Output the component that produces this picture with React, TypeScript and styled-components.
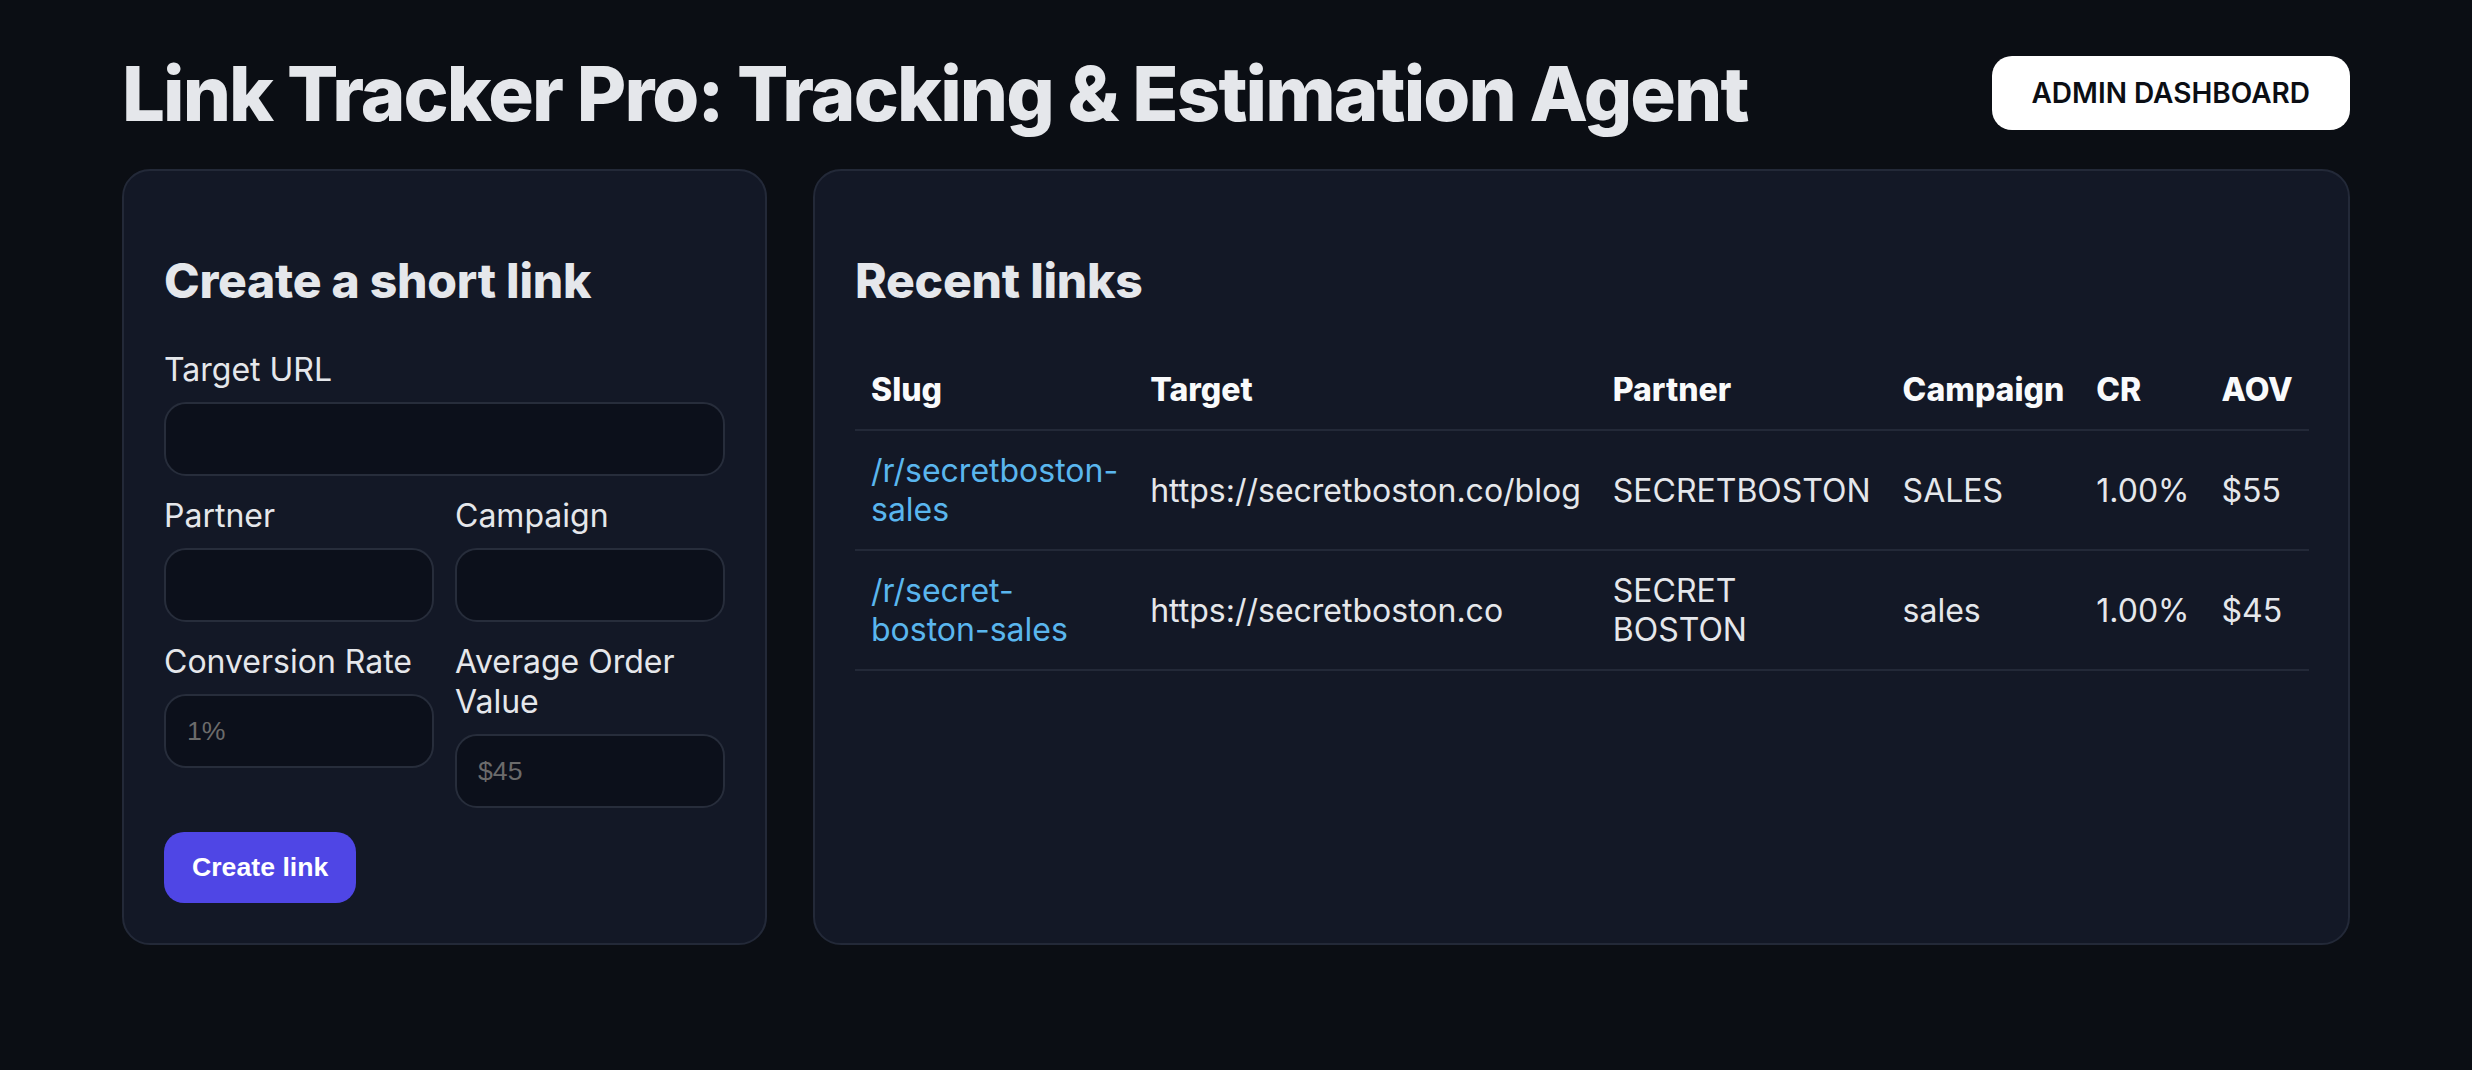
import React from "react";
import styled, { createGlobalStyle } from "styled-components";

const GlobalStyle = createGlobalStyle`
  html, body {
    margin: 0;
    padding: 0;
    background: #0b0e14;
  }
  body {
    font-family: Inter, "Noto Sans", sans-serif;
    color: #e5e7eb;
  }
`;

const Page = styled.div`
  max-width: 2228px;
  margin: 0 auto;
  padding: 47px 0 48px;
  box-sizing: border-box;
`;

const Header = styled.header`
  display: flex;
  align-items: center;
  justify-content: space-between;
  margin-bottom: 30px;
`;

const Title = styled.h1`
  margin: 0;
  font-size: 76px;
  font-weight: 800;
  color: #e5e7eb;
  letter-spacing: -0.025em;
`;

const AdminButton = styled.a`
  display: inline-flex;
  align-items: center;
  justify-content: center;
  height: 74px;
  padding: 0 40px;
  box-sizing: border-box;
  background: #ffffff;
  color: #0b0e14;
  border-radius: 20px;
  font-size: 28px;
  font-weight: 600;
  text-decoration: none;
`;

const Columns = styled.div`
  display: grid;
  grid-template-columns: 645px 1fr;
  gap: 46px;
  align-items: stretch;
`;

const Card = styled.section`
  background: #131826;
  border: 2px solid #232938;
  border-radius: 28px;
  padding: 40px;
  box-sizing: border-box;
  min-width: 0;
`;

const CardTitle = styled.h2`
  margin: 40px 0;
  font-size: 48px;
  font-weight: 800;
  color: #e5e7eb;
  letter-spacing: -0.005em;
`;

const Form = styled.form`
  display: flex;
  flex-direction: column;
  gap: 20px;
`;

const FieldRow = styled.div`
  display: grid;
  grid-template-columns: 1fr 1fr;
  column-gap: 21px;
  align-items: start;
`;

const Field = styled.label`
  display: flex;
  flex-direction: column;
  gap: 12px;
  font-size: 32px;
  line-height: 40px;
  color: #e5e7eb;
`;

const Input = styled.input`
  height: 74px;
  box-sizing: border-box;
  width: 100%;
  padding: 0 21px;
  background: #0c101b;
  border: 2px solid #272d3b;
  border-radius: 22px;
  font-family: "Liberation Sans", Arial, sans-serif;
  font-size: 26.67px;
  color: #e5e7eb;
  outline: none;
  &::placeholder {
    color: #6b6b6b;
  }
`;

const SubmitButton = styled.button`
  align-self: flex-start;
  margin-top: 4px;
  padding: 0 28px;
  height: 71px;
  border: none;
  border-radius: 20px;
  background: #4f46e5;
  color: #ffffff;
  font-family: "Liberation Sans", Arial, sans-serif;
  font-size: 26.67px;
  font-weight: 700;
  cursor: pointer;
`;

const Table = styled.table`
  width: 100%;
  border-collapse: collapse;
  font-size: 32px;
`;

const HeadCell = styled.th`
  text-align: left;
  padding: 20px 16px;
  font-weight: 800;
  color: #f9fafb;
  border-bottom: 2px solid #232938;
`;

const Cell = styled.td`
  text-align: left;
  padding: 20px 16px;
  color: #e5e7eb;
  border-bottom: 2px solid #232938;
  vertical-align: middle;
`;

const SlugLink = styled.a`
  color: #5ab6ee;
  text-decoration: none;
`;

type LinkRow = {
  slug: string;
  target: string;
  partner: string;
  campaign: string;
  cr: string;
  aov: string;
};

const rows: LinkRow[] = [
  {
    slug: "/r/secretboston-sales",
    target: "https://secretboston.co/blog",
    partner: "SECRETBOSTON",
    campaign: "SALES",
    cr: "1.00%",
    aov: "$55",
  },
  {
    slug: "/r/secret-boston-sales",
    target: "https://secretboston.co",
    partner: "SECRET BOSTON",
    campaign: "sales",
    cr: "1.00%",
    aov: "$45",
  },
];

export default function App() {
  return (
    <>
      <GlobalStyle />
      <Page>
        <Header>
          <Title>Link Tracker Pro: Tracking &amp; Estimation Agent</Title>
          <AdminButton href="#">ADMIN DASHBOARD</AdminButton>
        </Header>
        <Columns>
          <Card>
            <CardTitle>Create a short link</CardTitle>
            <Form onSubmit={(e) => e.preventDefault()}>
              <Field>
                Target URL
                <Input type="text" />
              </Field>
              <FieldRow>
                <Field>
                  Partner
                  <Input type="text" />
                </Field>
                <Field>
                  Campaign
                  <Input type="text" />
                </Field>
              </FieldRow>
              <FieldRow>
                <Field>
                  Conversion Rate
                  <Input type="text" placeholder="1%" />
                </Field>
                <Field>
                  Average Order Value
                  <Input type="text" placeholder="$45" />
                </Field>
              </FieldRow>
              <SubmitButton type="submit">Create link</SubmitButton>
            </Form>
          </Card>
          <Card>
            <CardTitle>Recent links</CardTitle>
            <Table>
              <thead>
                <tr>
                  <HeadCell>Slug</HeadCell>
                  <HeadCell>Target</HeadCell>
                  <HeadCell>Partner</HeadCell>
                  <HeadCell>Campaign</HeadCell>
                  <HeadCell>CR</HeadCell>
                  <HeadCell>AOV</HeadCell>
                </tr>
              </thead>
              <tbody>
                {rows.map((r) => (
                  <tr key={r.slug}>
                    <Cell>
                      <SlugLink href="#">{r.slug}</SlugLink>
                    </Cell>
                    <Cell>{r.target}</Cell>
                    <Cell>{r.partner}</Cell>
                    <Cell>{r.campaign}</Cell>
                    <Cell>{r.cr}</Cell>
                    <Cell>{r.aov}</Cell>
                  </tr>
                ))}
              </tbody>
            </Table>
          </Card>
        </Columns>
      </Page>
    </>
  );
}
